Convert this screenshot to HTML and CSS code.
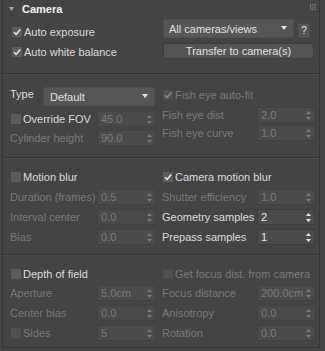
FILE: index.html
```html
<!DOCTYPE html>
<html lang="en">
<head>
  <meta charset="UTF-8">
  <title>Camera</title>
  <link rel="stylesheet" href="styles.css">
</head>
<body>

<div class="rollout">
  <div class="head">
    <svg class="twisty" width="5" height="4" viewBox="0 0 5 4"><path d="M0 0H5L2.5 4Z"/></svg>
    <span class="title">Camera</span>
    <svg class="grip" width="6" height="6" viewBox="0 0 6 6">
      <rect x="0" y="0" width="1.3" height="1.3"/><rect x="2.3" y="0" width="1.3" height="1.3"/><rect x="4.6" y="0" width="1.3" height="1.3"/>
      <rect x="0" y="2.3" width="1.3" height="1.3"/><rect x="2.3" y="2.3" width="1.3" height="1.3"/><rect x="4.6" y="2.3" width="1.3" height="1.3"/>
      <rect x="0" y="4.6" width="1.3" height="1.3"/><rect x="2.3" y="4.6" width="1.3" height="1.3"/><rect x="4.6" y="4.6" width="1.3" height="1.3"/>
    </svg>
  </div>

  <!-- exposure -->
  <div class="sec sec-top">
    <div class="col col-checks">
      <div class="check"><span class="box"><svg width="10" height="10" viewBox="0 0 10 10"><path d="M2 5.2L4.1 7.4L8.2 2.4"/></svg></span>Auto exposure</div>
      <div class="check"><span class="box"><svg width="10" height="10" viewBox="0 0 10 10"><path d="M2 5.2L4.1 7.4L8.2 2.4"/></svg></span>Auto white balance</div>
    </div>
    <div class="col">
      <div class="combo-row">
        <div class="combo combo-views">All cameras/views<svg class="drop" width="6" height="4" viewBox="0 0 6 4"><path d="M0 0H6L3 4Z"/></svg></div>
        <div class="help">?</div>
      </div>
      <div class="btn">Transfer to camera(s)</div>
    </div>
  </div>

  <!-- type / fov -->
  <div class="sec sec-type">
    <div class="col col-left">
      <div class="row">
        <span class="lbl lbl-type">Type</span>
        <div class="combo combo-type">Default<svg class="drop" width="6" height="4" viewBox="0 0 6 4"><path d="M0 0H6L3 4Z"/></svg></div>
      </div>
      <div class="row r-gap5">
        <div class="check lbl"><span class="box"></span>Override FOV</div>
        <div class="spin off"><span>45.0</span><svg class="arrows" width="5" height="9" viewBox="0 0 5 9"><path d="M2.5 0L5 3H0Z M0 6H5L2.5 9Z"/></svg></div>
      </div>
      <div class="row r-gap3">
        <span class="lbl off">Cylinder height</span>
        <div class="spin off"><span>90.0</span><svg class="arrows" width="5" height="9" viewBox="0 0 5 9"><path d="M2.5 0L5 3H0Z M0 6H5L2.5 9Z"/></svg></div>
      </div>
    </div>
    <div class="col col-right">
      <div class="row">
        <div class="check off"><span class="box"><svg width="10" height="10" viewBox="0 0 10 10"><path d="M2 5.2L4.1 7.4L8.2 2.4"/></svg></span>Fish eye auto-fit</div>
      </div>
      <div class="row r-gap4">
        <span class="lbl wide off">Fish eye dist</span>
        <div class="spin narrow off"><span>2.0</span><svg class="arrows" width="5" height="9" viewBox="0 0 5 9"><path d="M2.5 0L5 3H0Z M0 6H5L2.5 9Z"/></svg></div>
      </div>
      <div class="row r-gap2">
        <span class="lbl wide off">Fish eye curve</span>
        <div class="spin narrow off"><span>1.0</span><svg class="arrows" width="5" height="9" viewBox="0 0 5 9"><path d="M2.5 0L5 3H0Z M0 6H5L2.5 9Z"/></svg></div>
      </div>
    </div>
  </div>

  <!-- motion blur -->
  <div class="sec sec-grid sec-motion">
    <div class="check"><span class="box"></span>Motion blur</div>
    <div class="check"><span class="box"><svg width="10" height="10" viewBox="0 0 10 10"><path d="M2 5.2L4.1 7.4L8.2 2.4"/></svg></span>Camera motion blur</div>

    <div class="row">
      <span class="lbl off">Duration (frames)</span>
      <div class="spin off"><span>0.5</span><svg class="arrows" width="5" height="9" viewBox="0 0 5 9"><path d="M2.5 0L5 3H0Z M0 6H5L2.5 9Z"/></svg></div>
    </div>
    <div class="row">
      <span class="lbl wide off">Shutter efficiency</span>
      <div class="spin narrow off"><span>1.0</span><svg class="arrows" width="5" height="9" viewBox="0 0 5 9"><path d="M2.5 0L5 3H0Z M0 6H5L2.5 9Z"/></svg></div>
    </div>

    <div class="row">
      <span class="lbl off">Interval center</span>
      <div class="spin off"><span>0.0</span><svg class="arrows" width="5" height="9" viewBox="0 0 5 9"><path d="M2.5 0L5 3H0Z M0 6H5L2.5 9Z"/></svg></div>
    </div>
    <div class="row">
      <span class="lbl wide">Geometry samples</span>
      <div class="spin narrow"><span>2</span><svg class="arrows" width="5" height="9" viewBox="0 0 5 9"><path d="M2.5 0L5 3H0Z M0 6H5L2.5 9Z"/></svg></div>
    </div>

    <div class="row">
      <span class="lbl off">Bias</span>
      <div class="spin off"><span>0.0</span><svg class="arrows" width="5" height="9" viewBox="0 0 5 9"><path d="M2.5 0L5 3H0Z M0 6H5L2.5 9Z"/></svg></div>
    </div>
    <div class="row">
      <span class="lbl wide">Prepass samples</span>
      <div class="spin narrow"><span>1</span><svg class="arrows" width="5" height="9" viewBox="0 0 5 9"><path d="M2.5 0L5 3H0Z M0 6H5L2.5 9Z"/></svg></div>
    </div>
  </div>

  <!-- depth of field -->
  <div class="sec sec-grid sec-dof">
    <div class="check"><span class="box"></span>Depth of field</div>
    <div class="check off"><span class="box"></span>Get focus dist. from camera</div>

    <div class="row">
      <span class="lbl off">Aperture</span>
      <div class="spin off"><span>5.0cm</span><svg class="arrows" width="5" height="9" viewBox="0 0 5 9"><path d="M2.5 0L5 3H0Z M0 6H5L2.5 9Z"/></svg></div>
    </div>
    <div class="row">
      <span class="lbl wide off">Focus distance</span>
      <div class="spin narrow off"><span>200.0cm</span><svg class="arrows" width="5" height="9" viewBox="0 0 5 9"><path d="M2.5 0L5 3H0Z M0 6H5L2.5 9Z"/></svg></div>
    </div>

    <div class="row">
      <span class="lbl off">Center bias</span>
      <div class="spin off"><span>0.0</span><svg class="arrows" width="5" height="9" viewBox="0 0 5 9"><path d="M2.5 0L5 3H0Z M0 6H5L2.5 9Z"/></svg></div>
    </div>
    <div class="row">
      <span class="lbl wide off">Anisotropy</span>
      <div class="spin narrow off"><span>0.0</span><svg class="arrows" width="5" height="9" viewBox="0 0 5 9"><path d="M2.5 0L5 3H0Z M0 6H5L2.5 9Z"/></svg></div>
    </div>

    <div class="row">
      <div class="check lbl off"><span class="box"></span>Sides</div>
      <div class="spin off"><span>5</span><svg class="arrows" width="5" height="9" viewBox="0 0 5 9"><path d="M2.5 0L5 3H0Z M0 6H5L2.5 9Z"/></svg></div>
    </div>
    <div class="row">
      <span class="lbl wide off">Rotation</span>
      <div class="spin narrow off"><span>0.0</span><svg class="arrows" width="5" height="9" viewBox="0 0 5 9"><path d="M2.5 0L5 3H0Z M0 6H5L2.5 9Z"/></svg></div>
    </div>
  </div>
</div>

</body>
</html>
```

FILE: styles.css
```css
body {
  margin: 0;
  width: 325px;
  height: 351px;
  overflow: hidden;
  background: #444444;
  font-family: 'Liberation Sans', Arial, sans-serif;
  font-size: 11px;
  color: #dcdcdc;
}
.rollout {
  margin-left: 2px;
  width: 316px;
  border: 1px solid #363636;
  border-top: none;
}
.head {
  height: 17px;
  display: flex;
  align-items: center;
  padding-left: 6px;
}
.twisty {
  fill: #a8a8a8;
}
.title {
  margin-left: 8px;
  padding-top: 1px;
  font-weight: bold;
  color: #f2f2f2;
}
.grip {
  margin-left: auto;
  margin-right: 3px;
  align-self: flex-start;
  margin-top: 4px;
  fill: #8a8a8a;
}

/* sections */
.sec {
  box-sizing: border-box;
  border-top: 1px solid #343434;
  box-shadow: inset 0 1px 0 #4b4b4b;
  padding-left: 7px;
  display: grid;
  grid-template-columns: 146px 153px;
  column-gap: 6px;
}
.sec-top {
  height: 56px;
  border-top: none;
  box-shadow: none;
}
.sec-type {
  height: 84px;
}
.sec-grid {
  row-gap: 4px;
  align-content: start;
  grid-auto-rows: 16px;
}
.sec-motion {
  height: 97px;
  padding-top: 11px;
}
.sec-dof {
  height: 93px;
  padding-top: 12px;
  grid-template-rows: 14px;
}
.col {
  display: flex;
  flex-direction: column;
}
.col-checks {
  padding-top: 5px;
}
.col-checks .check {
  height: 20px;
  margin-left: 2px;
}
.col-left, .col-right {
  padding-top: 13px;
}
.row {
  display: flex;
  align-items: center;
  height: 16px;
}
.col-left .row:first-child {
  height: 19px;
}
.r-gap2 { margin-top: 2px; }
.r-gap3 { margin-top: 3px; }
.r-gap4 { margin-top: 4px; }
.r-gap5 { margin-top: 5px; }

.lbl {
  width: 87px;
  flex-shrink: 0;
  white-space: nowrap;
}
.lbl.wide {
  width: 95px;
}
.lbl-type {
  width: 33px;
  align-self: flex-start;
  margin-top: 1px;
}
.off {
  color: #7b7b7b;
}

/* checkboxes */
.check {
  display: flex;
  align-items: center;
  white-space: nowrap;
}
.sec-grid .check, .col-right .check, .row .check {
  margin-left: 1px;
}
.check.lbl {
  width: 86px;
}
.box {
  width: 10px;
  height: 10px;
  margin-right: 2px;
  background: #5c5c5c;
  flex-shrink: 0;
}
.box svg {
  display: block;
  fill: none;
  stroke: #e4e4e4;
  stroke-width: 1.6;
}
.off .box {
  background: #505050;
}
.off .box svg {
  stroke: #8a8a8a;
}

/* dropdowns and buttons */
.combo-row {
  display: flex;
  align-items: flex-end;
  padding-top: 2px;
}
.combo {
  box-sizing: border-box;
  display: flex;
  align-items: center;
  height: 19px;
  padding-left: 6px;
  background: #565656;
  border: 1px solid #4f4f4f;
  border-radius: 2px;
  color: #e0e0e0;
  white-space: nowrap;
}
.combo-views {
  width: 131px;
  margin-left: 1px;
  padding-left: 5px;
}
.combo-type {
  width: 112px;
}
.drop {
  margin-left: auto;
  margin-right: 6px;
  fill: #e6e6e6;
  margin-top: -2px;
}
.help {
  box-sizing: border-box;
  width: 12px;
  height: 15px;
  margin-left: 4px;
  background: #565656;
  border: 1px solid #4c4c4c;
  border-radius: 2px;
  font-size: 10px;
  text-align: center;
  line-height: 14px;
  color: #e6e6e6;
}
.btn {
  box-sizing: border-box;
  width: 151px;
  height: 16px;
  margin-top: 5px;
  margin-left: 1px;
  background: #545454;
  border: 1px solid #3c3c3c;
  border-radius: 3px;
  text-align: center;
  line-height: 14px;
  color: #e2e2e2;
}

/* spinners */
.spin {
  box-sizing: border-box;
  display: flex;
  align-items: center;
  width: 59px;
  height: 16px;
  padding-left: 3px;
  background: #4b4b4b;
  border: 1px solid #3d3d3d;
  color: #e8e8e8;
}
.spin.narrow {
  width: 58px;
}
.spin.off {
  color: #7b7b7b;
  border-color: #424242;
}
.arrows {
  margin-left: auto;
  margin-right: 3px;
  fill: currentColor;
}
```
